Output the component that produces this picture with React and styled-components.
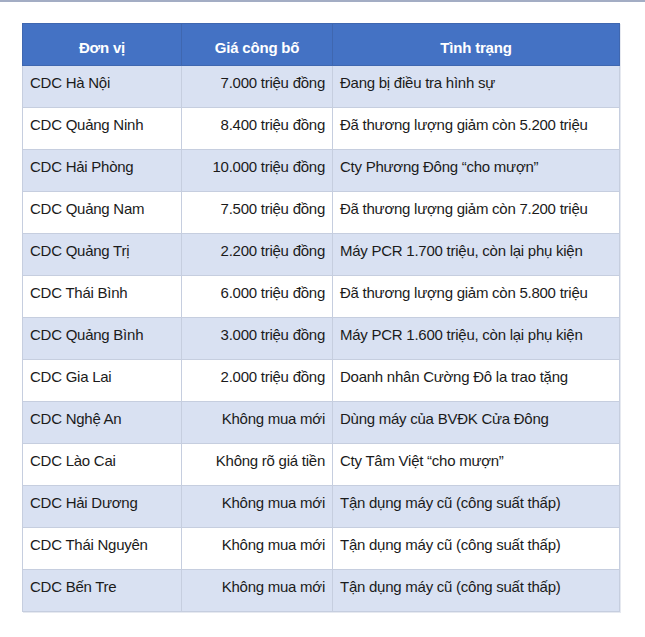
import React from "react";
import styled, { createGlobalStyle } from "styled-components";

const Global = createGlobalStyle`
  html, body { margin: 0; padding: 0; background: #ffffff; }
  body { font-family: "Liberation Sans", Arial, sans-serif; }
`;

const Page = styled.div`
  width: 645px;
  height: 637px;
  background: #fff;
  border-top: 2px solid #a3adc4;
  box-sizing: border-box;
  padding: 21px 0 0 22px;
`;

const Table = styled.table`
  border-collapse: collapse;
  table-layout: fixed;
  width: 597px;
  border: 1px solid #c2c9d8;
  box-shadow: 1px 1px 0 #e6e9f0;
`;

const HeadRow = styled.tr`
  height: 42px;
`;

const HeadCell = styled.th`
  background: #4472c4;
  color: #ffffff;
  font-weight: bold;
  font-size: 15px;
  letter-spacing: -0.2px;
  line-height: 20px;
  padding: 14px 7px 6px;
  text-align: center;
  vertical-align: top;
  border: 1px solid #3f67b0;
`;

const Row = styled.tr`
  height: 42px;
  background: ${(p) => (p.$shaded ? "#d9e1f2" : "#ffffff")};
`;

const Cell = styled.td`
  font-size: 15px;
  letter-spacing: -0.25px;
  line-height: 20px;
  color: #1b1b1b;
  padding: 7px 7px 0;
  vertical-align: top;
  white-space: nowrap;
  text-align: ${(p) => (p.$right ? "right" : "left")};
  border: 1px solid #c6cedf;
`;

const rows = [
  ["CDC Hà Nội", "7.000 triệu đồng", "Đang bị điều tra hình sự"],
  ["CDC Quảng Ninh", "8.400 triệu đồng", "Đã thương lượng giảm còn 5.200 triệu"],
  ["CDC Hải Phòng", "10.000 triệu đồng", "Cty Phương Đông “cho mượn”"],
  ["CDC Quảng Nam", "7.500 triệu đồng", "Đã thương lượng giảm còn 7.200 triệu"],
  ["CDC Quảng Trị", "2.200 triệu đồng", "Máy PCR 1.700 triệu, còn lại phụ kiện"],
  ["CDC Thái Bình", "6.000 triệu đồng", "Đã thương lượng giảm còn 5.800 triệu"],
  ["CDC Quảng Bình", "3.000 triệu đồng", "Máy PCR 1.600 triệu, còn lại phụ kiện"],
  ["CDC Gia Lai", "2.000 triệu đồng", "Doanh nhân Cường Đô la trao tặng"],
  ["CDC Nghệ An", "Không mua mới", "Dùng máy của BVĐK Cửa Đông"],
  ["CDC Lào Cai", "Không rõ giá tiền", "Cty Tâm Việt “cho mượn”"],
  ["CDC Hải Dương", "Không mua mới", "Tận dụng máy cũ (công suất thấp)"],
  ["CDC Thái Nguyên", "Không mua mới", "Tận dụng máy cũ (công suất thấp)"],
  ["CDC Bến Tre", "Không mua mới", "Tận dụng máy cũ (công suất thấp)"],
];

export default function App() {
  return (
    <>
      <Global />
      <Page>
        <Table>
          <colgroup>
            <col style={{ width: 159 }} />
            <col style={{ width: 151 }} />
            <col style={{ width: 287 }} />
          </colgroup>
          <thead>
            <HeadRow>
              <HeadCell>Đơn vị</HeadCell>
              <HeadCell>Giá công bố</HeadCell>
              <HeadCell>Tình trạng</HeadCell>
            </HeadRow>
          </thead>
          <tbody>
            {rows.map((r, i) => (
              <Row key={i} $shaded={i % 2 === 0}>
                <Cell>{r[0]}</Cell>
                <Cell $right>{r[1]}</Cell>
                <Cell>{r[2]}</Cell>
              </Row>
            ))}
          </tbody>
        </Table>
      </Page>
    </>
  );
}
